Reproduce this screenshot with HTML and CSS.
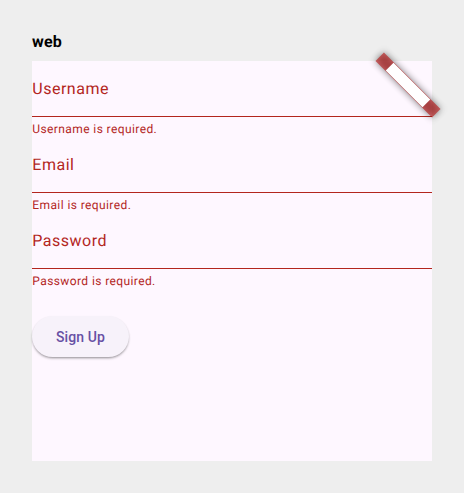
FILE: index.html
```html
<!DOCTYPE html>
<html lang="en">
<head>
<meta charset="utf-8">
<title>web</title>
<link rel="stylesheet" href="styles.css">
</head>
<body>
<h1 class="title">web</h1>
<main class="panel">
  <div class="banner" aria-hidden="true">
    <svg width="80" height="80" viewBox="0 0 80 80">
      <g transform="translate(40 40) rotate(45)">
        <rect class="shadow" x="-40" y="-6" width="80" height="12"/>
        <rect class="band" x="-40" y="-6" width="80" height="12"/>
        <rect class="label" x="-26" y="-5.5" width="52" height="11"/>
      </g>
    </svg>
  </div>
  <form class="form">
    <div class="field"><label class="name">Username</label><p class="error">Username is required.</p></div>
    <div class="field"><label class="name">Email</label><p class="error">Email is required.</p></div>
    <div class="field"><label class="name">Password</label><p class="error">Password is required.</p></div>
    <button class="submit" type="button">Sign Up</button>
  </form>
</main>
</body>
</html>
```

FILE: styles.css
```css
* { box-sizing: border-box; }
body { margin: 0; padding: 32px; height: 493px; background: #eee; font-family: Roboto, sans-serif; text-rendering: geometricPrecision; }
.title { margin: 0; height: 29px; font-size: 16px; line-height: 19px; font-weight: 700; letter-spacing: .15px; color: #000; }
.panel { position: relative; width: 400px; height: 400px; background: #fef7ff; }
.field { height: 76px; color: #b3261e; }
.name { display: block; height: 56px; padding: 16px 0 0 .3px; border-bottom: 1px solid #b3261e; font-size: 16px; line-height: 24px; letter-spacing: .5px; }
.error { margin: 0; padding: 4px 0 0 .3px; font-size: 12px; line-height: 16px; letter-spacing: .4px; }
.submit { display: block; margin-top: 27px; width: 97px; height: 41px; padding: 1px 0 0; border: 0; border-radius: 20.5px; background: #f7f2fa; color: #6750a4; font: 500 14px/20px Roboto, sans-serif; letter-spacing: .1px; box-shadow: 0 2px 3px -1px rgba(0,0,0,.36), 0 1px 2px rgba(0,0,0,.12); }
.banner { position: absolute; top: -16px; right: -16px; width: 80px; height: 80px; }
.banner svg { display: block; overflow: visible; }
.shadow { fill: #000; fill-opacity: .5; filter: blur(3.5px); }
.band { fill: #b71c1c; fill-opacity: .65; }
.label { fill: #fff; }
```
